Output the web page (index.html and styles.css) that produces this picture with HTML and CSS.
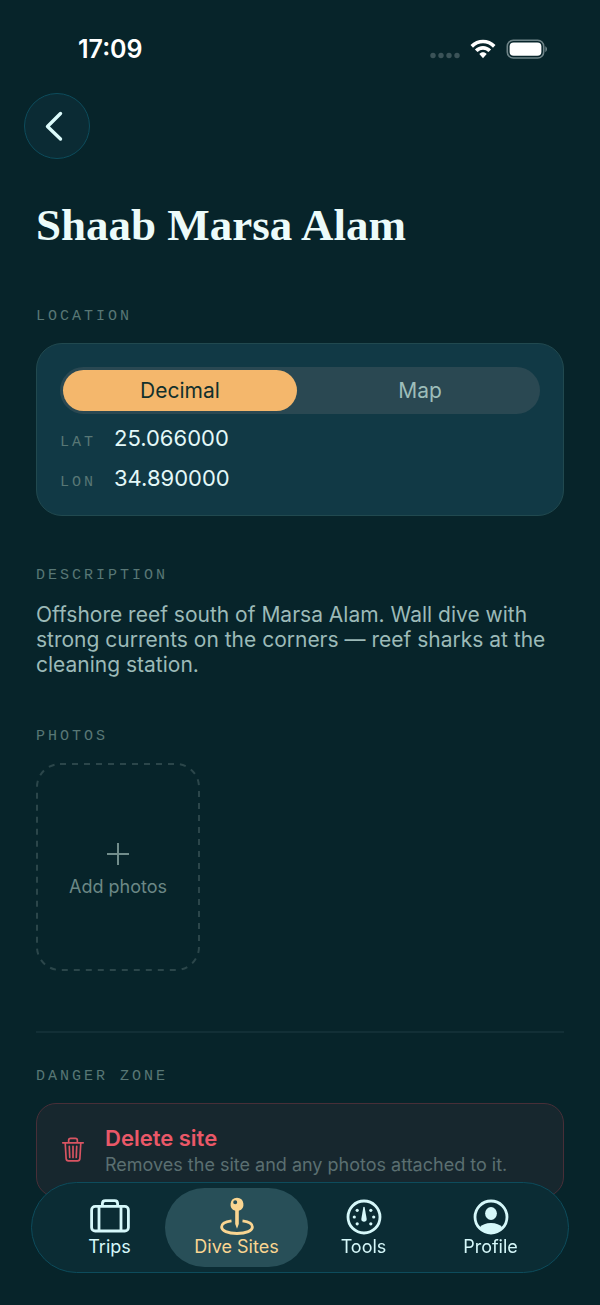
FILE: index.html
```html
<!DOCTYPE html>
<html lang="en">
<head>
<meta charset="utf-8">
<meta name="viewport" content="width=device-width, initial-scale=1">
<title>Shaab Marsa Alam</title>
<link rel="stylesheet" href="styles.css">
</head>
<body>
<div class="screen">
  <header class="status">
    <time class="status-time">17:09</time>
    <div class="status-icons">
      <svg class="signal" width="30" height="20" viewBox="0 0 30 20" aria-hidden="true">
        <circle cx="3" cy="16.5" r="2.7"/><circle cx="11" cy="16.5" r="2.7"/><circle cx="19" cy="16.5" r="2.7"/><circle cx="27" cy="16.5" r="2.7"/>
      </svg>
      <svg class="wifi" width="26" height="20" viewBox="0 0 26 20" aria-hidden="true">
        <path d="M.5 6.1C7.3-1.2 18.7-1.2 25.5 6.1L23 8.7C17.5 2.9 8.5 2.9 3 8.7Z"/>
        <path d="M4.9 10.4c4.4-4.7 11.8-4.7 16.2 0l-2.6 2.7c-3-3.3-8-3.3-11 0Z"/>
        <path d="M9.3 15c2-2.3 5.4-2.3 7.4 0L13 19.2Z"/>
      </svg>
      <svg class="battery" width="42" height="20" viewBox="0 0 42 20" aria-hidden="true">
        <rect class="battery-shell" x="1.3" y="1.2" width="36.4" height="17.8" rx="6"/>
        <rect class="battery-fill" x="3.6" y="3.4" width="31.8" height="13.4" rx="4"/>
        <path class="battery-tip" d="M39.3 7.3c2.3.9 2.3 4.7 0 5.6Z"/>
      </svg>
    </div>
  </header>

  <nav class="topbar">
    <button class="back" type="button" aria-label="Back">
      <svg width="32" height="32" viewBox="0 0 32 32" aria-hidden="true"><path d="M20.5 3.5 7.5 16.5l13 12.5"/></svg>
    </button>
  </nav>

  <main class="content">
    <h1 class="title">Shaab Marsa Alam</h1>

    <section class="section">
      <h2 class="label">LOCATION</h2>
      <div class="card">
        <div class="segments" role="group" aria-label="Coordinate view">
          <button class="segment segment-on" type="button" aria-pressed="true">Decimal</button>
          <button class="segment" type="button" aria-pressed="false">Map</button>
        </div>
        <dl class="coords">
          <div class="coord"><dt class="label">LAT</dt><dd class="coord-value">25.066000</dd></div>
          <div class="coord"><dt class="label">LON</dt><dd class="coord-value">34.890000</dd></div>
        </dl>
      </div>
    </section>

    <section class="section">
      <h2 class="label">DESCRIPTION</h2>
      <p class="description">Offshore reef south of Marsa Alam. Wall dive with strong currents on the corners — reef sharks at the cleaning station.</p>
    </section>

    <section class="section">
      <h2 class="label">PHOTOS</h2>
      <button class="add" type="button">
        <svg class="add-outline" aria-hidden="true"><rect x="1" y="1" rx="23"/></svg>
        <svg class="add-plus" width="24" height="24" viewBox="0 0 24 24" aria-hidden="true"><path d="M12 1v22M1 12h22"/></svg>
        <span>Add photos</span>
      </button>
    </section>

    <hr class="divider">

    <section class="section-danger">
      <h2 class="label">DANGER ZONE</h2>
      <button class="danger" type="button">
        <svg class="trash" width="24" height="26" viewBox="0 0 24 28" aria-hidden="true">
          <path d="M1 6.300h22M7.300 6V3.700C7.300 2.300 8.200 1.500 9.500 1.500h5c1.300 0 2.200.8 2.200 2.200V6M3.600 6.500l1 16.800c.1 1.600 1 2.400 2.500 2.400h9.800c1.500 0 2.400-.8 2.500-2.400l1-16.800M8 10l.5 12M12 10v12M16 10l-.5 12"/>
        </svg>
        <span class="danger-text">
          <span class="danger-title">Delete site</span>
          <span class="danger-note">Removes the site and any photos attached to it.</span>
        </span>
      </button>
    </section>
  </main>

  <nav class="tabs" aria-label="Main">
    <a class="tab" href="#trips">
      <svg width="42" height="39" viewBox="0 0 42 39" aria-hidden="true">
        <g class="line"><rect x="2.600" y="9.400" width="36.800" height="24.600" rx="3.600"/><path d="M13.400 9.400V6.600c0-2 1-3 3-3h9.200c2 0 3 1 3 3V9.400M10 9.400v24.600M32 9.400v24.600"/></g>
      </svg>
      <span>Trips</span>
    </a>
    <a class="tab tab-on" href="#sites" aria-current="page">
      <svg width="42" height="39" viewBox="0 0 42 39" aria-hidden="true">
        <path class="solid" fill-rule="evenodd" d="M21 .8a6.600 6.600 0 0 1 1.800 12.900V27L21 31.800 19.200 27V13.700A6.600 6.600 0 0 1 21 .8ZM19.200 3.200a2 2 0 1 0 0 4 2 2 0 0 0 0-4Z"/>
        <path class="line" d="M15.500 23.900C9 24.700 5.600 27.200 5.600 30c0 3.700 6 6.500 15.400 6.500S36.400 33.700 36.400 30c0-2.800-3.400-5.300-9.900-6.100"/>
      </svg>
      <span>Dive Sites</span>
    </a>
    <a class="tab" href="#tools">
      <svg width="42" height="39" viewBox="0 0 42 39" aria-hidden="true">
        <circle class="line" cx="21" cy="20" r="16"/>
        <path class="solid" d="M20.300 10.500c.2-1 1.200-1 1.400 0l2 11.500c.3 3.600-5.700 3.600-5.400 0Z"/>
        <g class="solid"><circle cx="14.200" cy="13.300" r="1.600"/><circle cx="27.800" cy="13.300" r="1.600"/><circle cx="11.300" cy="20" r="1.600"/><circle cx="30.700" cy="20" r="1.600"/><circle cx="14.200" cy="26.800" r="1.600"/><circle cx="27.800" cy="26.800" r="1.600"/></g>
      </svg>
      <span>Tools</span>
    </a>
    <a class="tab" href="#profile">
      <svg width="42" height="39" viewBox="0 0 42 39" aria-hidden="true">
        <circle class="line" cx="21" cy="20" r="16"/>
        <ellipse class="solid" cx="21" cy="16.500" rx="5.900" ry="6.500"/>
        <path class="solid" d="M9.500 30.500C12 27.500 16 26 21 26s9 1.500 11.500 4.500C29.500 34 25.500 36 21 36S12.500 34 9.500 30.500Z"/>
      </svg>
      <span>Profile</span>
    </a>
  </nav>
</div>
</body>
</html>
```
FILE: styles.css
```css
* { box-sizing: border-box; }

body {
  margin: 0;
  background: #07242a;
  color: #e3f8f8;
  font-family: Inter, "Liberation Sans", sans-serif;
  font-size: 22px;
}

button {
  margin: 0;
  border: 0;
  background: none;
  color: inherit;
  font: inherit;
  cursor: pointer;
}

h1, h2, p, dl, dd { margin: 0; }

.screen {
  min-height: 100vh;
  padding-bottom: 104px;
}

.status {
  display: flex;
  align-items: center;
  justify-content: space-between;
  padding: 32px 52px 0 78px;
  color: #fff;
}

.status-time {
  font-size: 25px;
  font-weight: 600;
  line-height: 34px;
}

.status-icons { display: flex; align-items: center; gap: 10px; }
.signal { fill: #3b5358; }
.wifi, .battery-fill { fill: #fff; }
.battery-shell { fill: none; stroke: #6f8488; stroke-width: 1.6; }
.battery-tip { fill: #6f8488; }

.topbar { padding: 27px 24px 0; }

.back {
  display: grid;
  place-items: center;
  width: 66px;
  height: 66px;
  padding: 0 3px 0 0;
  border: 1px solid #0d4c5c;
  border-radius: 50%;
  background: #0b2b34;
}

.back path {
  fill: none;
  stroke: #dcfbfb;
  stroke-width: 3.4;
  stroke-linecap: round;
  stroke-linejoin: round;
}

.content { padding: 39px 36px 0; }

.title {
  font-family: "Liberation Serif", serif;
  font-size: 45px;
  font-weight: 700;
  line-height: 54px;
  color: #ecfbfa;
}

.label {
  font-family: "Liberation Mono", monospace;
  font-size: 15px;
  font-weight: 400;
  line-height: 20px;
  letter-spacing: 3px;
  color: #587775;
}

.section { margin-top: 50px; }
.title + .section { margin-top: 55px; }

.card {
  margin-top: 16px;
  padding: 23px;
  border: 1px solid #21494f;
  border-radius: 26px;
  background: #113945;
}

.segments {
  display: grid;
  grid-template-columns: 1fr 1fr;
  gap: 6px;
  padding: 3px;
  border-radius: 24px;
  background: #2a4852;
}

.segment {
  padding: 0;
  border-radius: 21px;
  font-size: 21px;
  line-height: 41px;
  color: #9dbdb9;
}

.segment-on { background: #f4b76c; color: #12302c; }

.coords { display: grid; gap: 12px; margin-top: 10px; }
.coord { display: flex; align-items: baseline; gap: 18px; }
.coord .label { line-height: 16px; }
.coord-value { line-height: 28px; }

.description {
  margin-top: 16px;
  font-size: 21px;
  line-height: 25px;
  color: #9cbab8;
}

.add {
  position: relative;
  display: flex;
  flex-direction: column;
  align-items: center;
  justify-content: center;
  gap: 10px;
  width: 164px;
  height: 208px;
  margin-top: 16px;
  padding: 5px 0 0;
  border-radius: 24px;
  font-size: 18px;
  line-height: 22px;
  color: #6c8886;
}

.add-outline {
  position: absolute;
  inset: 0;
  width: 100%;
  height: 100%;
}

.add-outline rect {
  width: calc(100% - 2px);
  height: calc(100% - 2px);
  fill: none;
  stroke: #2b464a;
  stroke-width: 2;
  stroke-dasharray: 6 6;
}

.add-plus { fill: none; stroke: #718d8b; stroke-width: 2; }

.divider {
  height: 2px;
  margin: 60px 0 0;
  border: 0;
  background: #122f36;
}

.section-danger { margin-top: 34px; }

.danger {
  display: flex;
  align-items: center;
  gap: 20px;
  width: 100%;
  margin-top: 16px;
  padding: 19px 24px;
  border: 1px solid #482f38;
  border-radius: 20px;
  background: #17272e;
  text-align: left;
}

.trash {
  flex: none;
  fill: none;
  stroke: #d95462;
  stroke-width: 1.8;
  stroke-linecap: round;
  stroke-linejoin: round;
}

.danger-text { display: grid; }
.danger-title { font-weight: 600; line-height: 30px; color: #ea5868; }
.danger-note { font-size: 18px; line-height: 24px; color: #5b6f71; }

.tabs {
  position: fixed;
  right: 31px;
  bottom: 32px;
  left: 31px;
  display: flex;
  padding: 5px 14px;
  border: 1px solid #0d4c5c;
  border-radius: 46px;
  background: #0b2c34;
}

.tab {
  position: relative;
  display: flex;
  flex: 1;
  flex-direction: column;
  align-items: center;
  padding: 9px 0;
  font-size: 18px;
  line-height: 22px;
  color: #d6f8fa;
  text-decoration: none;
}

.tab-on { color: #fad591; }

.tab-on::before {
  content: "";
  position: absolute;
  inset: 0 -8px;
  z-index: -1;
  border-radius: 40px;
  background: #284f58;
}

.tab .line { fill: none; stroke: currentColor; stroke-width: 2.8; }
.tab .solid { fill: currentColor; }
```
